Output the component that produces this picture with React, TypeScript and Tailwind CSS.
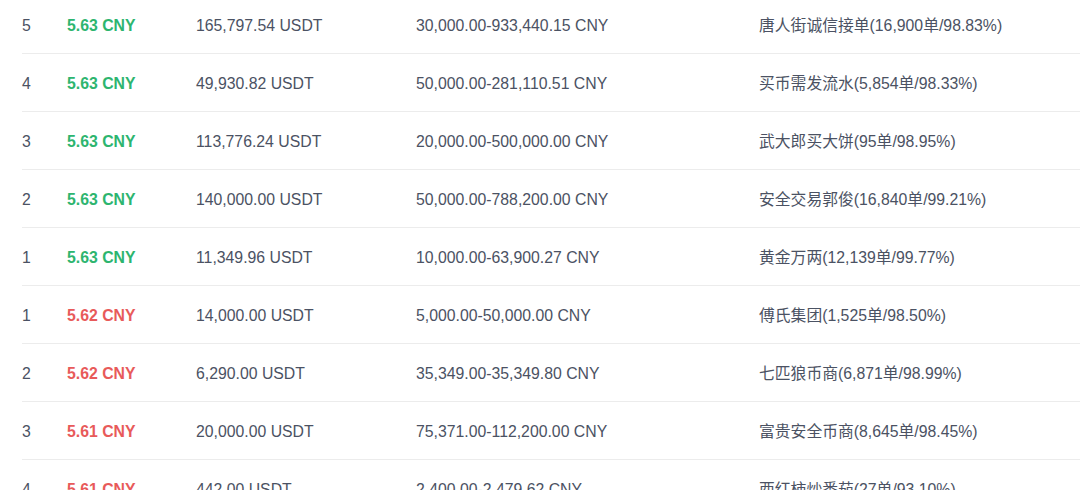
const rows = [
  { idx: 5, price: '5.63 CNY', up: true, amount: '165,797.54 USDT', limit: '30,000.00-933,440.15 CNY', merchant: '唐人街诚信接单(16,900单/98.83%)' },
  { idx: 4, price: '5.63 CNY', up: true, amount: '49,930.82 USDT', limit: '50,000.00-281,110.51 CNY', merchant: '买币需发流水(5,854单/98.33%)' },
  { idx: 3, price: '5.63 CNY', up: true, amount: '113,776.24 USDT', limit: '20,000.00-500,000.00 CNY', merchant: '武大郎买大饼(95单/98.95%)' },
  { idx: 2, price: '5.63 CNY', up: true, amount: '140,000.00 USDT', limit: '50,000.00-788,200.00 CNY', merchant: '安全交易郭俊(16,840单/99.21%)' },
  { idx: 1, price: '5.63 CNY', up: true, amount: '11,349.96 USDT', limit: '10,000.00-63,900.27 CNY', merchant: '黄金万两(12,139单/99.77%)' },
  { idx: 1, price: '5.62 CNY', up: false, amount: '14,000.00 USDT', limit: '5,000.00-50,000.00 CNY', merchant: '傅氏集团(1,525单/98.50%)' },
  { idx: 2, price: '5.62 CNY', up: false, amount: '6,290.00 USDT', limit: '35,349.00-35,349.80 CNY', merchant: '七匹狼币商(6,871单/98.99%)' },
  { idx: 3, price: '5.61 CNY', up: false, amount: '20,000.00 USDT', limit: '75,371.00-112,200.00 CNY', merchant: '富贵安全币商(8,645单/98.45%)' },
  { idx: 4, price: '5.61 CNY', up: false, amount: '442.00 USDT', limit: '2,400.00-2,479.62 CNY', merchant: '西红柿炒番茄(27单/93.10%)' },
];

export default function App() {
  return (
    <div
      className="w-[1080px] h-[490px] overflow-hidden bg-white text-[#4b5263] text-[15.8px]"
      style={{ fontFamily: '"Liberation Sans", "Noto Sans CJK SC", sans-serif' }}
    >
      <div className="ml-[22px] -mt-[4px]">
        {rows.map((r, i) => (
          <div key={i} className="flex items-center h-[58px] pt-[3px] border-b border-[#ececec] whitespace-nowrap">
            <div className="w-[45px]">{r.idx}</div>
            <div className={`w-[129px] font-bold ${r.up ? 'text-[#2db56f]' : 'text-[#e85a5a]'}`}>{r.price}</div>
            <div className="w-[220px]">{r.amount}</div>
            <div className="w-[343px]">{r.limit}</div>
            <div>{r.merchant}</div>
          </div>
        ))}
      </div>
    </div>
  );
}
